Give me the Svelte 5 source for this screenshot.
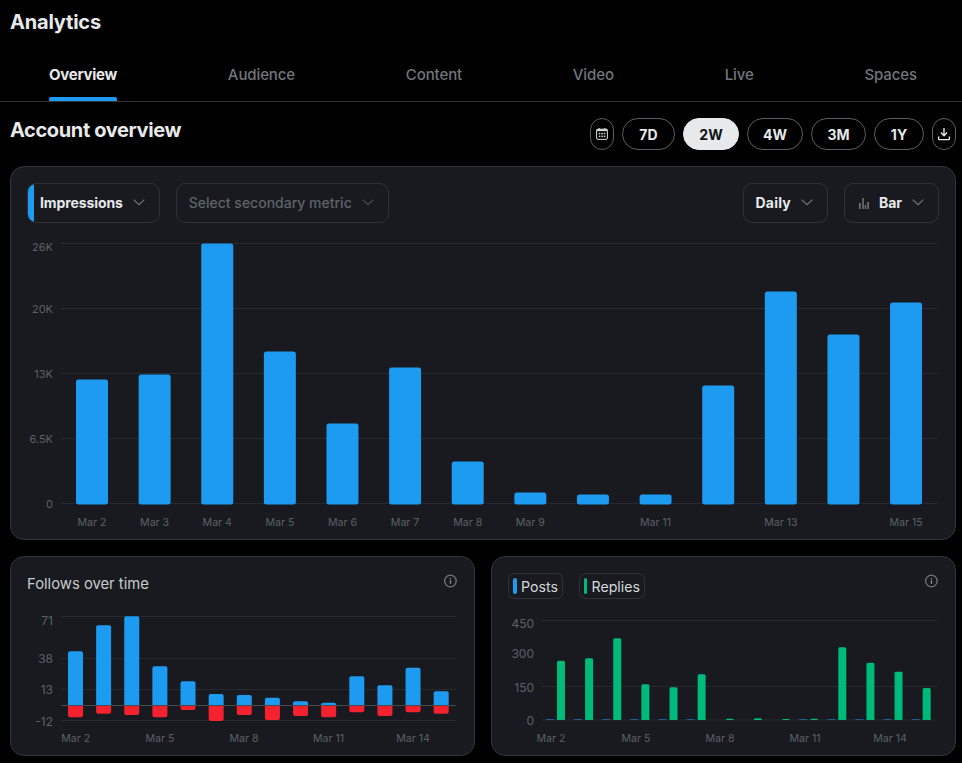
<script>
  const tabs = ['Overview', 'Audience', 'Content', 'Video', 'Live', 'Spaces'];
  const ranges = ['7D', '2W', '4W', '3M', '1Y'];

  const roundTop = (x, w, top, base, r) =>
    `M${x} ${base}V${top + r}Q${x} ${top} ${x + r} ${top}H${x + w - r}Q${x + w} ${top} ${x + w} ${top + r}V${base}Z`;
  const roundBottom = (x, w, base, bottom, r) =>
    `M${x} ${base}V${bottom - r}Q${x} ${bottom} ${x + r} ${bottom}H${x + w - r}Q${x + w} ${bottom} ${x + w} ${bottom - r}V${base}Z`;

  // Main chart
  const mainTicks = [['26K', 244], ['20K', 309], ['13K', 374], ['6.5K', 439], ['0', 504]];
  const mainTops = [380, 375, 244, 352, 424, 368, 462, 493, 495, 495, 386, 292, 335, 303];
  const mainLabels = ['Mar 2', 'Mar 3', 'Mar 4', 'Mar 5', 'Mar 6', 'Mar 7', 'Mar 8', 'Mar 9', '', 'Mar 11', '', 'Mar 13', '', 'Mar 15'];
  const mainX = (i) => 76 + i * 62.62;

  // Follows chart
  const followTicks = [['71', 616.5, 620], ['38', 658.5, 658], ['13', 689.5, 689], ['-12', 720.5, 721]];
  const followTops = [304, 226, 199, 349, 394, 432, 435, 443, 454, 458, 379, 406, 353, 424].map((v) => 550 + v / 3);
  const followBottoms = [502, 491, 495, 502, 480, 513, 495, 510, 498, 502, 487, 498, 487, 491].map((v) => 550 + v / 3);
  const followX = (i) => 68 + i * 28.13;
  const followLabels = [['Mar 2', 75.7], ['Mar 5', 160], ['Mar 8', 244], ['Mar 11', 328.5], ['Mar 14', 413]];

  // Posts / replies chart
  const replyTicks = [['450', 623], ['300', 653], ['150', 687], ['0', 720]];
  const replyTops = [332, 325, 265, 403, 412, 373, 506, 505, 507, 506, 292, 338, 365, 414].map((v) => 550 + v / 3);
  const hasPosts = [1, 1, 1, 1, 1, 1, 0, 0, 0, 1, 1, 1, 1, 1];
  const replyX = (i) => 557 + i * 28.13;
  const replyLabels = [['Mar 2', 551], ['Mar 5', 636], ['Mar 8', 720], ['Mar 11', 805], ['Mar 14', 890]];
</script>

{#snippet chevron()}
  <svg class="chev" viewBox="0 0 16 16" width="16" height="16" aria-hidden="true">
    <path d="M2.6 5.6 8 10.6l5.4-5" fill="none" stroke="currentColor" stroke-width="1.2" />
  </svg>
{/snippet}

{#snippet info()}
  <svg class="info" viewBox="0 0 16 16" width="16" height="16" aria-hidden="true">
    <circle cx="8.4" cy="8" r="5.8" fill="none" stroke="#71767b" stroke-width="1.3" />
    <rect x="7.8" y="7.2" width="1.3" height="3.6" fill="#8b8f93" />
    <rect x="7.8" y="5" width="1.3" height="1.3" fill="#8b8f93" />
  </svg>
{/snippet}

<div class="page">
  <h1>Analytics</h1>

  <nav class="tabs">
    {#each tabs as tab, i}
      <span class="tab" class:active={i === 0}>{tab}</span>
    {/each}
  </nav>

  <section class="toolbar">
    <h2>Account overview</h2>
    <div class="ranges">
      <span class="pill">
        <svg viewBox="0 0 14 14" width="14" height="14" aria-hidden="true">
          <rect x="1.6" y="2.2" width="10.8" height="10.2" rx="1.4" fill="none" stroke="#d8dadb" stroke-width="1" />
          <rect x="1.6" y="2.2" width="10.8" height="1.9" fill="#d8dadb" />
          <rect x="3.6" y="1" width="1.1" height="1.6" fill="#d8dadb" />
          <rect x="9.3" y="1" width="1.1" height="1.6" fill="#d8dadb" />
          <rect x="3.8" y="5.8" width="1.5" height="1.5" fill="#d8dadb" />
          <rect x="6.3" y="5.8" width="1.5" height="1.5" fill="#d8dadb" />
          <rect x="8.8" y="5.8" width="1.5" height="1.5" fill="#d8dadb" />
          <rect x="3.8" y="8.6" width="1.5" height="1.5" fill="#d8dadb" />
          <rect x="6.3" y="8.6" width="1.5" height="1.5" fill="#d8dadb" />
          <rect x="8.8" y="8.6" width="1.5" height="1.5" fill="#d8dadb" />
        </svg>
      </span>
      {#each ranges as r}
        <span class="pill" class:on={r === '2W'}>{r}</span>
      {/each}
      <span class="pill">
        <svg viewBox="0 0 14 14" width="14" height="14" aria-hidden="true">
          <path d="M7 1v7.4M3.9 5.6 7 8.7l3.1-3.1" fill="none" stroke="#e7e9ea" stroke-width="1.4" />
          <path d="M1.6 9.4v2.4a.8.8 0 0 0 .8.8h9.2a.8.8 0 0 0 .8-.8V9.4" fill="none" stroke="#e7e9ea" stroke-width="1.4" />
        </svg>
      </span>
    </div>
  </section>

  <section class="card main">
    <div class="controls">
      <div class="select primary"><i class="strip"></i><b>Impressions</b>{@render chevron()}</div>
      <div class="select muted"><span>Select secondary metric</span>{@render chevron()}</div>
      <div class="spacer"></div>
      <div class="select daily"><b>Daily</b>{@render chevron()}</div>
      <div class="select">
        <svg class="barsicon" viewBox="0 0 16 16" width="16" height="16" aria-hidden="true">
          <g fill="#71767b">
            <rect x="2" y="9" width="1.6" height="6" />
            <rect x="5.3" y="4" width="1.5" height="11" />
            <rect x="7.8" y="11" width="1.4" height="4" />
            <rect x="10.3" y="8" width="1.6" height="7" />
          </g>
        </svg>
        <b>Bar</b>{@render chevron()}
      </div>
    </div>

    <svg class="chart main-chart" viewBox="11 223 944 316" width="944" height="316">
      {#each mainTicks as [label, y]}
        <line x1="61" x2="937" y1={y - 0.5} y2={y - 0.5} class="grid" />
        <text x="53" y={y + (label === '26K' ? 3 : 0)} text-anchor="end" dominant-baseline="central" class="axis">{label}</text>
      {/each}
      {#each mainTops as top, i}
        <rect x={mainX(i)} y={top - 0.5} width="32" height={505 - top} rx="2.5" fill="#1d9bf0" />
        {#if mainLabels[i]}
          <text x={mainX(i) + 16} y="522" text-anchor="middle" dominant-baseline="central" class="axis xl">{mainLabels[i]}</text>
        {/if}
      {/each}
    </svg>
  </section>

  <div class="row">
    <section class="card small">
      <header>
        <h3>Follows over time</h3>
        {@render info()}
      </header>
      <svg class="chart" viewBox="11 599 463 156" width="463" height="156">
        {#each followTicks as [label, y, ty]}
          <line x1="61" x2="456" y1={y} y2={y} class="grid" />
          <text x="53" y={ty} text-anchor="end" dominant-baseline="central" class="axis big">{label}</text>
        {/each}
        {#each followTops as top, i}
          <path d={roundTop(followX(i), 15, top, 705.3, 2)} fill="#1d9bf0" />
          <path d={roundBottom(followX(i), 15, 705.3, followBottoms[i], 2)} fill="#f4212e" />
        {/each}
        <line x1="61" x2="456" y1="705.5" y2="705.5" class="zero" />
        {#each followLabels as [label, x]}
          <text {x} y="738" text-anchor="middle" dominant-baseline="central" class="axis xl">{label}</text>
        {/each}
      </svg>
    </section>

    <section class="card small">
      <header>
        <div class="chips">
          <span class="chip"><i class="mark blue"></i>Posts</span>
          <span class="chip"><i class="mark green"></i>Replies</span>
        </div>
        {@render info()}
      </header>
      <svg class="chart" viewBox="492 599 463 156" width="463" height="156">
        <line x1="542" x2="937" y1="620.5" y2="620.5" class="grid" />
        <line x1="542" x2="937" y1="686.5" y2="686.5" class="grid" />
        <line x1="542" x2="937" y1="720" y2="720" class="grid" />
        {#each replyTicks as [label, y]}
          <text x="534" {y} text-anchor="end" dominant-baseline="central" class="axis big">{label}</text>
        {/each}
        {#each replyTops as top, i}
          {#if hasPosts[i]}
            <rect x={replyX(i) - 11} y="719" width="8" height="1" fill="#1a5f8e" />
          {/if}
          <path d={roundTop(replyX(i), 8, top, 720, 1.5)} fill="#00ba7c" />
        {/each}
        {#each replyLabels as [label, x]}
          <text {x} y="738" text-anchor="middle" dominant-baseline="central" class="axis xl">{label}</text>
        {/each}
      </svg>
    </section>
  </div>
</div>

<style>
  :global(body) {
    margin: 0;
    background: #000;
  }
  .page {
    width: 962px;
    height: 763px;
    overflow: hidden;
    background: #000;
    color: #e7e9ea;
    font-family: Inter, 'Liberation Sans', sans-serif;
  }
  h1 {
    margin: 0;
    padding-left: 10px;
    font-size: 20px;
    font-weight: 700;
    line-height: 44px;
    letter-spacing: -0.2px;
  }
  .tabs {
    display: flex;
    justify-content: space-between;
    height: 57px;
    padding: 0 45px 0 49px;
    border-bottom: 1px solid #2f3336;
  }
  .tab {
    position: relative;
    padding-top: 20px;
    font-size: 15px;
    font-weight: 500;
    line-height: 22px;
    color: #71767b;
    letter-spacing: -0.1px;
  }
  .tab.active {
    color: #e7e9ea;
    font-weight: 700;
    letter-spacing: -0.25px;
  }
  .tab.active::after {
    content: '';
    position: absolute;
    left: 0;
    right: 0;
    bottom: 0;
    height: 4px;
    border-radius: 2px 2px 0 0;
    background: #1d9bf0;
  }
  .toolbar {
    display: flex;
    justify-content: space-between;
    align-items: flex-start;
    padding: 16px 6px 16px 10px;
  }
  h2 {
    margin: 0;
    font-size: 20px;
    font-weight: 700;
    line-height: 24px;
    letter-spacing: -0.38px;
  }
  .ranges {
    display: grid;
    grid-template-columns: 24px 53px 56px 56px 55px 50px 24px;
    gap: 8px;
  }
  .pill {
    display: flex;
    align-items: center;
    justify-content: center;
    box-sizing: border-box;
    height: 32px;
    border: 1px solid #5b5e62;
    border-radius: 999px;
    font-size: 14px;
    font-weight: 700;
  }
  .pill.on {
    background: #e7e9ea;
    border-color: #e7e9ea;
    color: #0f1419;
  }
  .card {
    box-sizing: border-box;
    margin-left: 10px;
    border: 1px solid #33353a;
    border-radius: 14px;
    background: #181a1f;
    padding: 16px 16px 0;
  }
  .card.main {
    width: 946px;
    height: 374px;
  }
  .controls {
    display: flex;
    gap: 16px;
  }
  .spacer {
    flex: 1;
  }
  .select {
    display: flex;
    align-items: center;
    gap: 8px;
    box-sizing: border-box;
    height: 40px;
    padding: 0 12px;
    border: 1px solid #2f3136;
    border-radius: 9px;
    font-size: 14px;
    overflow: hidden;
    color: #e7e9ea;
  }
  .select > :not(.strip) {
    margin-bottom: 2px;
  }
  .select b {
    font-weight: 700;
  }
  .select.daily b {
    letter-spacing: 0.2px;
  }
  .select .chev {
    color: #71767b;
  }
  .select.primary {
    padding-left: 0;
    gap: 0;
  }
  .select.primary b {
    margin: 0 8px 2px 6px;
    letter-spacing: -0.1px;
  }
  .strip {
    width: 6px;
    height: 100%;
    background: #1d9bf0;
  }
  .select.muted {
    color: #5f6368;
    font-weight: 500;
  }
  .select.muted .chev {
    color: #4a4d52;
  }
  .barsicon {
    margin-right: -2px;
  }
  .chart {
    display: block;
    margin: 0 -16px;
  }
  .grid {
    stroke: #282a2f;
    stroke-width: 1;
  }
  .zero {
    stroke: #46484c;
    stroke-width: 1;
  }
  .axis {
    fill: #5c6066;
    font-size: 11px;
    font-family: Inter, 'Liberation Sans', sans-serif;
  }
  .axis.big {
    font-size: 12px;
  }
  .axis.xl {
    font-size: 10.6px;
  }
  .row {
    display: grid;
    grid-template-columns: 465px 465px;
    gap: 16px;
    margin: 16px 0 0 10px;
  }
  .row .card {
    margin: 0;
    height: 200px;
  }
  header {
    display: flex;
    justify-content: space-between;
    align-items: flex-start;
    height: 26px;
  }
  h3 {
    margin: 0;
    font-size: 14.8px;
    font-weight: 400;
    line-height: 22px;
    color: #c9cbce;
  }
  .info {
    flex: none;
  }
  .chips {
    display: grid;
    grid-template-columns: 55px 66px;
    gap: 16px;
  }
  .chip {
    display: flex;
    align-items: center;
    gap: 4px;
    box-sizing: border-box;
    height: 26px;
    padding: 0 4px;
    border: 1px solid #2f3136;
    border-radius: 6px;
    font-size: 14.2px;
    color: #d5d7da;
  }
  .mark {
    width: 4px;
    height: 16px;
    border-radius: 2px;
  }
  .blue {
    background: #1d9bf0;
  }
  .green {
    background: #00ba7c;
  }
</style>
